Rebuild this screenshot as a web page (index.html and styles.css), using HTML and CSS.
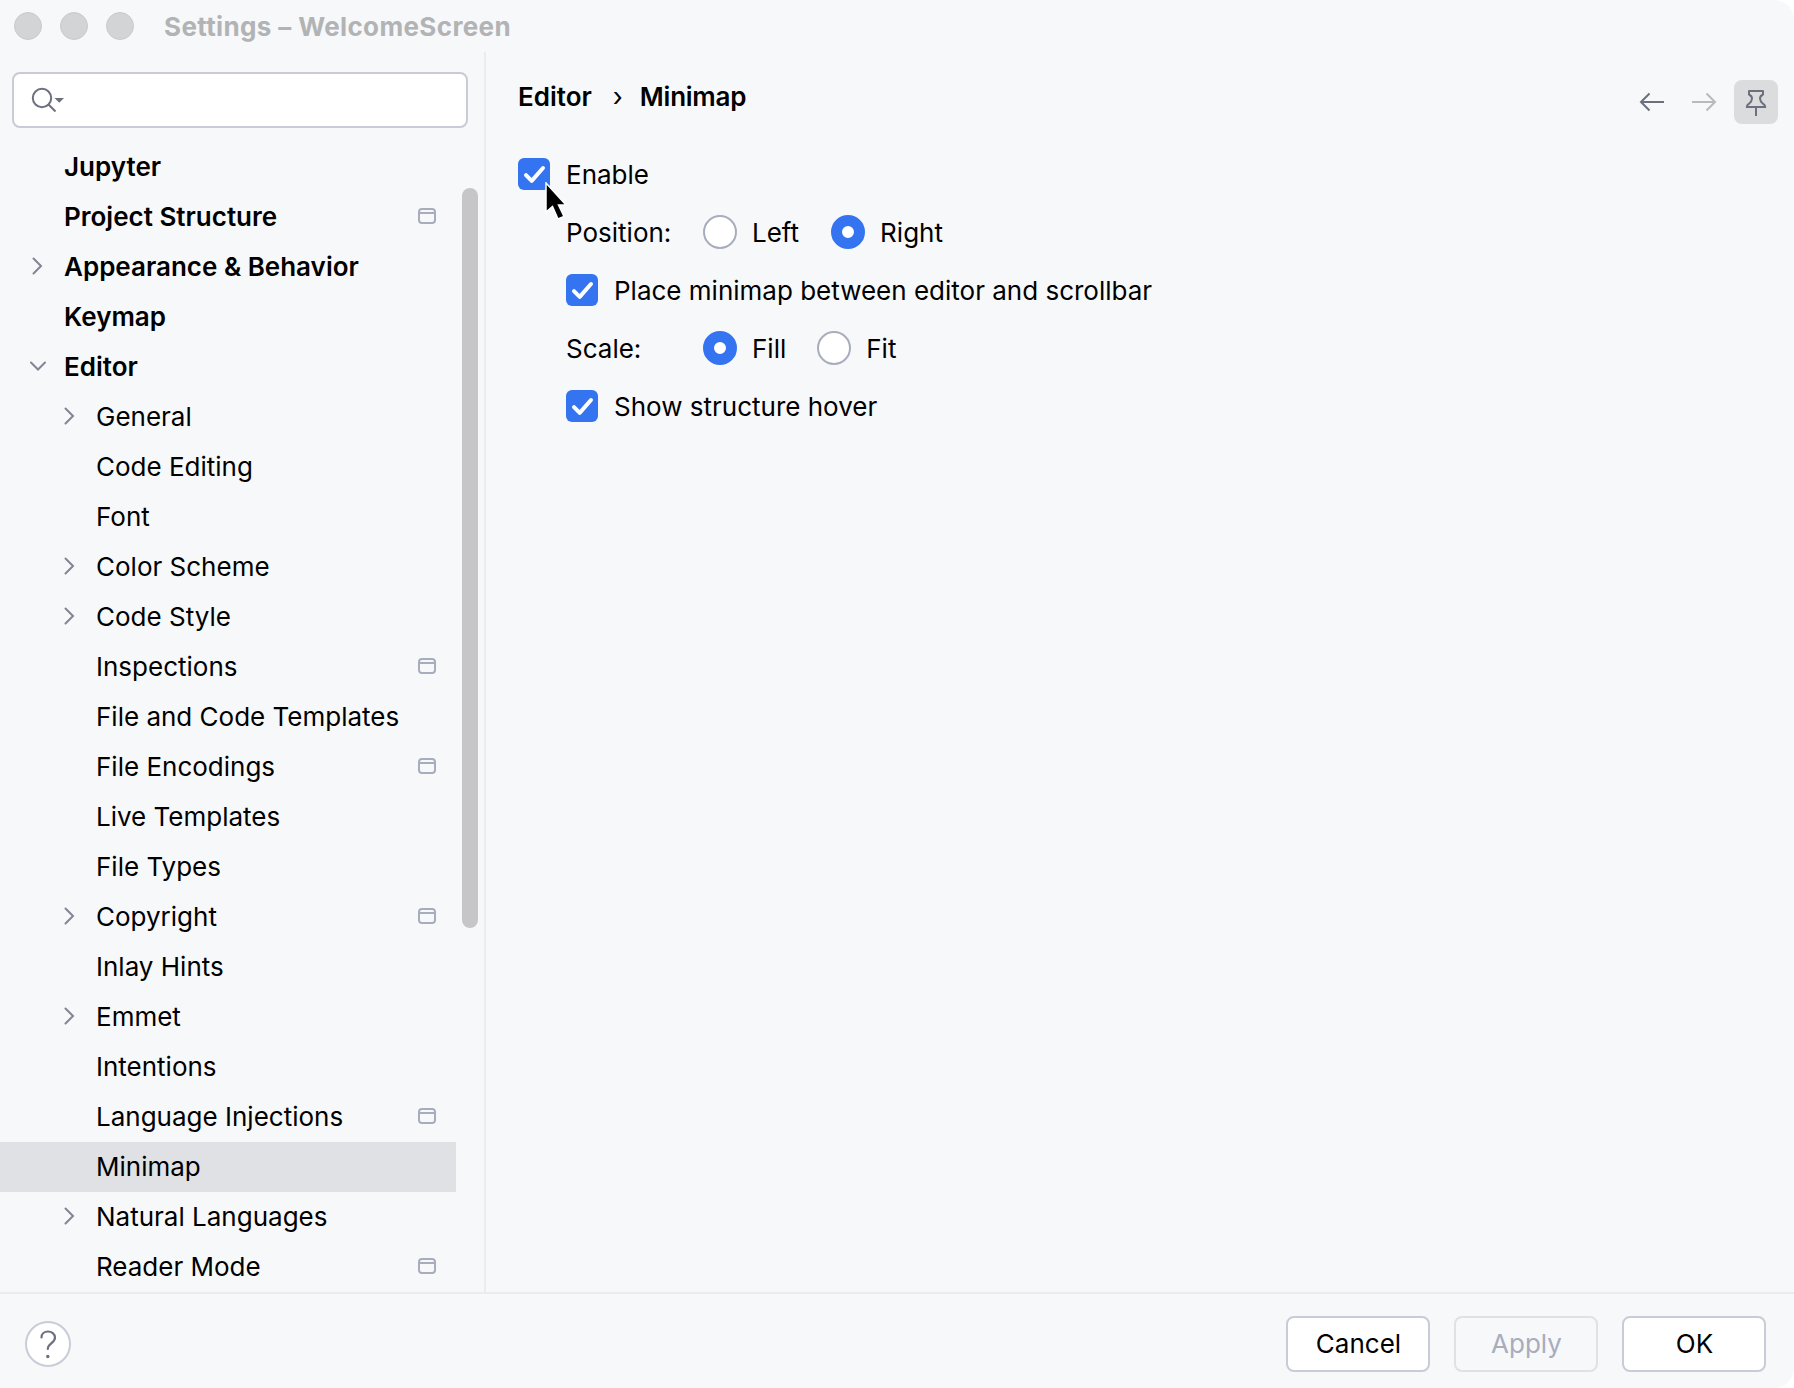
FILE: index.html
```html
<!DOCTYPE html>
<html lang="en">
<head>
<meta charset="utf-8">
<title>Settings – WelcomeScreen</title>
<link rel="stylesheet" href="styles.css">
</head>
<body>
<svg class="defs" width="0" height="0">
  <symbol id="right" viewBox="0 0 32 32"><path d="M11.5 8.5 19 16l-7.500 7.500" fill="none" stroke="#818594" stroke-width="2" stroke-linecap="round"/></symbol>
  <symbol id="down" viewBox="0 0 32 32"><path d="M9 12.500 16 19.500l7-7" fill="none" stroke="#818594" stroke-width="2" stroke-linecap="round"/></symbol>
  <symbol id="project" viewBox="0 0 18 16"><path d="M1 5h16" stroke="#a8adbd" stroke-width="2"/><rect x="1" y="1" width="16" height="14" rx="3" fill="none" stroke="#a8adbd" stroke-width="2"/></symbol>
  <symbol id="check" viewBox="0 0 32 32"><path d="M8 17.200l5.700 5.700L25 10" fill="none" stroke="#fff" stroke-width="4" stroke-linecap="round" stroke-linejoin="round"/></symbol>
</svg>
<div class="window">
  <header class="titlebar">
    <span class="light"></span><span class="light"></span><span class="light"></span>
    <h1 class="title">Settings – WelcomeScreen</h1>
  </header>
  <div class="body">
    <aside class="sidebar">
      <div class="search">
        <svg width="36" height="32" viewBox="0 0 36 32"><circle cx="12" cy="14" r="9.200" fill="none" stroke="#6c707e" stroke-width="2"/><path d="M18.500 20.500 25.500 27.500" stroke="#6c707e" stroke-width="2"/><path d="M24.500 14h9.500l-4.750 4.800z" fill="#6c707e"/></svg>
      </div>
      <div class="tree-area">
        <ul class="tree">
          <li class="row top"><span class="label">Jupyter</span></li>
          <li class="row top"><span class="label">Project Structure</span><svg class="project"><use href="#project"/></svg></li>
          <li class="row top"><svg class="arrow"><use href="#right"/></svg><span class="label">Appearance &amp; Behavior</span></li>
          <li class="row top"><span class="label">Keymap</span></li>
          <li class="row top"><svg class="arrow"><use href="#down"/></svg><span class="label">Editor</span></li>
          <li class="row"><svg class="arrow"><use href="#right"/></svg><span class="label">General</span></li>
          <li class="row"><span class="label">Code Editing</span></li>
          <li class="row"><span class="label">Font</span></li>
          <li class="row"><svg class="arrow"><use href="#right"/></svg><span class="label">Color Scheme</span></li>
          <li class="row"><svg class="arrow"><use href="#right"/></svg><span class="label">Code Style</span></li>
          <li class="row"><span class="label">Inspections</span><svg class="project"><use href="#project"/></svg></li>
          <li class="row"><span class="label">File and Code Templates</span></li>
          <li class="row"><span class="label">File Encodings</span><svg class="project"><use href="#project"/></svg></li>
          <li class="row"><span class="label">Live Templates</span></li>
          <li class="row"><span class="label">File Types</span></li>
          <li class="row"><svg class="arrow"><use href="#right"/></svg><span class="label">Copyright</span><svg class="project"><use href="#project"/></svg></li>
          <li class="row"><span class="label">Inlay Hints</span></li>
          <li class="row"><svg class="arrow"><use href="#right"/></svg><span class="label">Emmet</span></li>
          <li class="row"><span class="label">Intentions</span></li>
          <li class="row"><span class="label">Language Injections</span><svg class="project"><use href="#project"/></svg></li>
          <li class="row selected"><span class="label">Minimap</span></li>
          <li class="row"><svg class="arrow"><use href="#right"/></svg><span class="label">Natural Languages</span></li>
          <li class="row"><span class="label">Reader Mode</span><svg class="project"><use href="#project"/></svg></li>
        </ul>
        <div class="scrollbar"></div>
      </div>
    </aside>
    <main class="content">
      <div class="content-head">
        <nav class="crumbs"><span>Editor</span><span class="sep">›</span><span class="current">Minimap</span></nav>
        <div class="nav">
          <svg width="26" height="20" viewBox="0 0 26 20"><path d="M25 10H2M10.500 1.500 2 10l8.500 8.500" fill="none" stroke="#6c707e" stroke-width="2"/></svg>
          <svg width="26" height="20" viewBox="0 0 26 20"><path d="M1 10h23M15.500 1.500 24 10l-8.500 8.500" fill="none" stroke="#b9babd" stroke-width="2"/></svg>
          <span class="pin"><svg width="44" height="44" viewBox="0 0 44 44"><path d="M15 11h14v3.500c-2 1-3 2-3 4 0 3.500 2.500 4.500 4.500 6.500l.8 2H12.700l.8-2c2-2 4.500-3 4.500-6.500 0-2-1-3-3-4zM22 27v9" fill="none" stroke="#6c707e" stroke-width="2" stroke-linejoin="round"/></svg></span>
        </div>
      </div>
      <div class="form">
        <div class="line enable"><svg class="box"><use href="#check"/></svg><span class="text">Enable</span>
          <svg class="cursor" width="24" height="40" viewBox="0 0 24 40"><path d="M1 1v29l6.500-5.500L13 37l6-2.500L13.500 23H21z" fill="#000" stroke="#fff" stroke-width="1.500"/></svg>
        </div>
        <div class="line sub"><span class="field text">Position:</span><span class="radio"></span><span class="opt left text">Left</span><span class="radio on"></span><span class="opt text">Right</span></div>
        <div class="line sub"><svg class="box"><use href="#check"/></svg><span class="text">Place minimap between editor and scrollbar</span></div>
        <div class="line sub"><span class="field text">Scale:</span><span class="radio on"></span><span class="opt text">Fill</span><span class="radio"></span><span class="opt text">Fit</span></div>
        <div class="line sub"><svg class="box"><use href="#check"/></svg><span class="text">Show structure hover</span></div>
      </div>
    </main>
  </div>
  <footer class="footer">
    <span class="help"><svg width="42" height="42" viewBox="0 0 42 42"><path d="M14.500 14.500c0-4 3-6 6.500-6s7 2.200 7 6.300c0 5.200-7.200 5.700-7.200 11.200" fill="none" stroke="#6c707e" stroke-width="2.200" stroke-linecap="round"/><circle cx="20.800" cy="33.500" r="1.700" fill="#6c707e"/></svg></span>
    <div class="buttons"><button class="btn">Cancel</button><button class="btn" disabled>Apply</button><button class="btn">OK</button></div>
  </footer>
</div>
</body>
</html>
```
FILE: styles.css
```css
* { box-sizing: border-box; }
body { margin: 0; background: #fff; font: 26px/50px Inter, "Liberation Sans", sans-serif; color: #000; }
.defs { position: absolute; }
.window { width: 1794px; height: 1388px; display: flex; flex-direction: column; background: #f7f8fa; border-radius: 0 20px 20px 0; overflow: hidden; }
.titlebar { height: 52px; display: flex; align-items: center; gap: 18px; padding-left: 14px; flex: none; }
.light { width: 28px; height: 28px; border-radius: 50%; background: #d3d4d5; border: 1px solid #c9cacb; }
.title { margin: 0 0 0 12px; padding-top: 2px; font-size: 26px; font-weight: 700; letter-spacing: 0.36px; color: #b2b3b5; }
.body { display: flex; flex: 1; min-height: 0; border-bottom: 2px solid #ebecf0; }
.sidebar { width: 486px; border-right: 2px solid #ebecf0; padding-top: 20px; }
.search { width: 456px; height: 56px; margin-left: 12px; border: 2px solid #c9ccd6; border-radius: 8px; background: #fff; display: flex; align-items: center; padding-left: 16px; }
.tree-area { display: flex; margin-top: 14px; }
.tree { list-style: none; margin: 0; padding: 0; width: 456px; }
.row { height: 50px; display: flex; align-items: center; padding: 0 20px 0 96px; }
.row.top { padding-left: 64px; font-weight: 600; }
.row.selected { background: #dfe1e5; }
.arrow { width: 32px; height: 32px; margin: -2px 10px 0 -42px; flex: none; }
.label { flex: 1; white-space: nowrap; }
.project { width: 18px; height: 16px; flex: none; margin-top: -2px; }
.scrollbar { width: 16px; height: 740px; margin: 46px 0 0 6px; border-radius: 8px; background: #c6c6c8; }
.content { flex: 1; }
.content-head { display: flex; justify-content: space-between; padding: 20px 16px 0 32px; }
.crumbs { font-weight: 600; display: flex; }
.sep { width: 48px; padding-left: 4px; text-align: center; font-weight: 400; }
.current { letter-spacing: -0.25px; }
.nav { display: flex; align-items: center; height: 44px; margin-top: 8px; gap: 26px; }
.pin { width: 44px; height: 44px; border-radius: 8px; background: #dbdcde; margin-left: -9px; }
.pin svg { display: block; }
.form { padding: 21px 0 0 32px; }
.line { height: 58px; display: flex; align-items: center; position: relative; }
.sub { padding-left: 48px; }
.text { padding-top: 2px; }
.box { width: 32px; height: 32px; border-radius: 6px; background: #3574f0; margin-right: 16px; }
.field { width: 137px; }
.radio { width: 34px; height: 34px; border-radius: 50%; border: 2px solid #a8adbd; background: #fff; margin-right: 15px; }
.radio.on { border: 11px solid #3574f0; }
.opt { margin-right: 31px; }
.opt.left { margin-right: 32px; }
.cursor { position: absolute; left: 27px; top: 37px; }
.footer { height: 94px; display: flex; align-items: center; justify-content: space-between; padding: 12px 28px 6px 25px; flex: none; }
.help { width: 46px; height: 46px; border-radius: 50%; border: 2px solid #c9ccd6; background: #fff; }
.help svg { display: block; }
.buttons { display: flex; gap: 24px; }
.btn { width: 144px; height: 56px; border: 2px solid #c9ccd6; border-radius: 8px; background: #fff; font: inherit; line-height: 52px; color: #000; padding: 0 0 0 1px; }
.btn:disabled { background: transparent; border-color: #dfe1e5; color: #a8adbd; }
```
